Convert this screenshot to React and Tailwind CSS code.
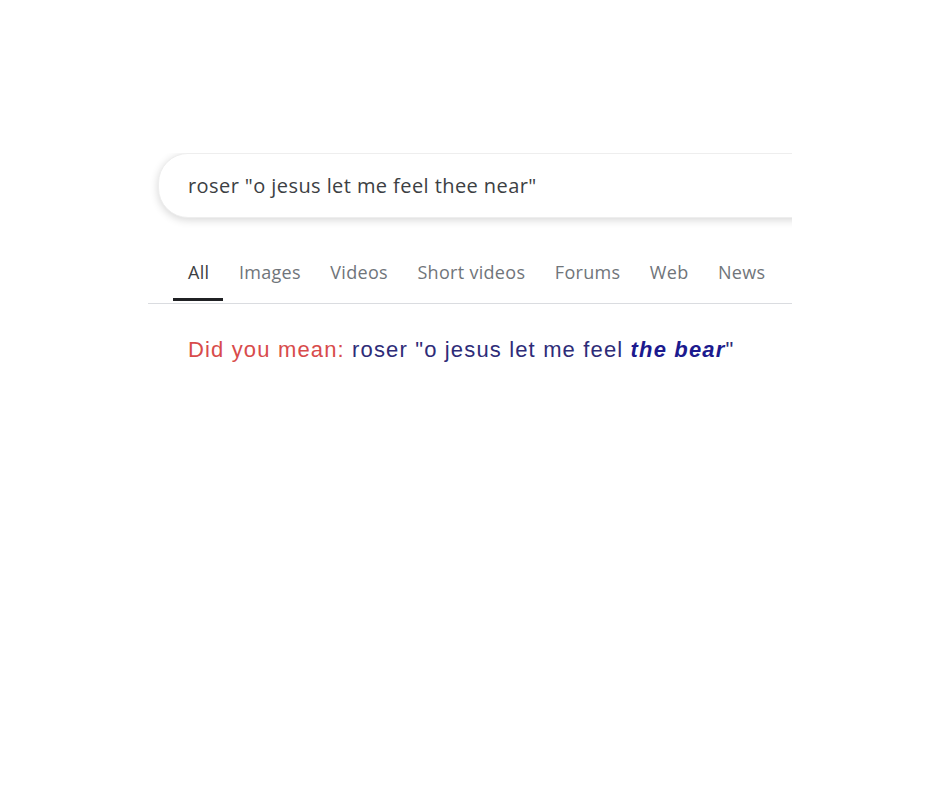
const tabs = ["All", "Images", "Videos", "Short videos", "Forums", "Web", "News"];

export default function App() {
  return (
    <div className="w-[940px] h-[788px] bg-white pt-[153px] pl-[148px]">
      <div className="w-[644px] overflow-hidden">
        {/* search box, cut off on the right */}
        <div className="pl-[10px] pb-[8px]">
          <div className="w-[700px] h-[65px] rounded-l-[30px] bg-white shadow-[0_2px_8px_rgba(0,0,0,0.16)] border border-[#eeeeee] flex items-center pl-[29px]">
            <span className="text-[20px] text-[#3c4043] font-['Open_Sans',sans-serif] tracking-[0.42px]">
              roser "o jesus let me feel thee near"
            </span>
          </div>
        </div>

        <div className="mt-[33px] border-b border-[#dadce0] flex pl-[40px] gap-[29.5px] font-['Open_Sans',sans-serif] text-[18px] tracking-[0.3px]">
          {tabs.map((t, i) => (
            <div key={t} className="relative pb-[17px]">
              <span className={i === 0 ? "text-[#3c4043]" : "text-[#70757a]"}>{t}</span>
              {i === 0 && (
                <div className="absolute left-[-15px] right-[-14px] bottom-[2px] h-[3px] bg-[#202124]"></div>
              )}
            </div>
          ))}
        </div>

        <p className="mt-[29px] pl-[40px] text-[22px] tracking-[1.15px] font-['Liberation_Sans',Arial,sans-serif] whitespace-nowrap">
          <span className="text-[#d84b4b]">Did you mean: </span>
          <span className="text-[#2e2c78]">
            roser "o jesus let me feel <b className="italic text-[#1c1a8e]">the bear</b>"
          </span>
        </p>
      </div>
    </div>
  );
}
